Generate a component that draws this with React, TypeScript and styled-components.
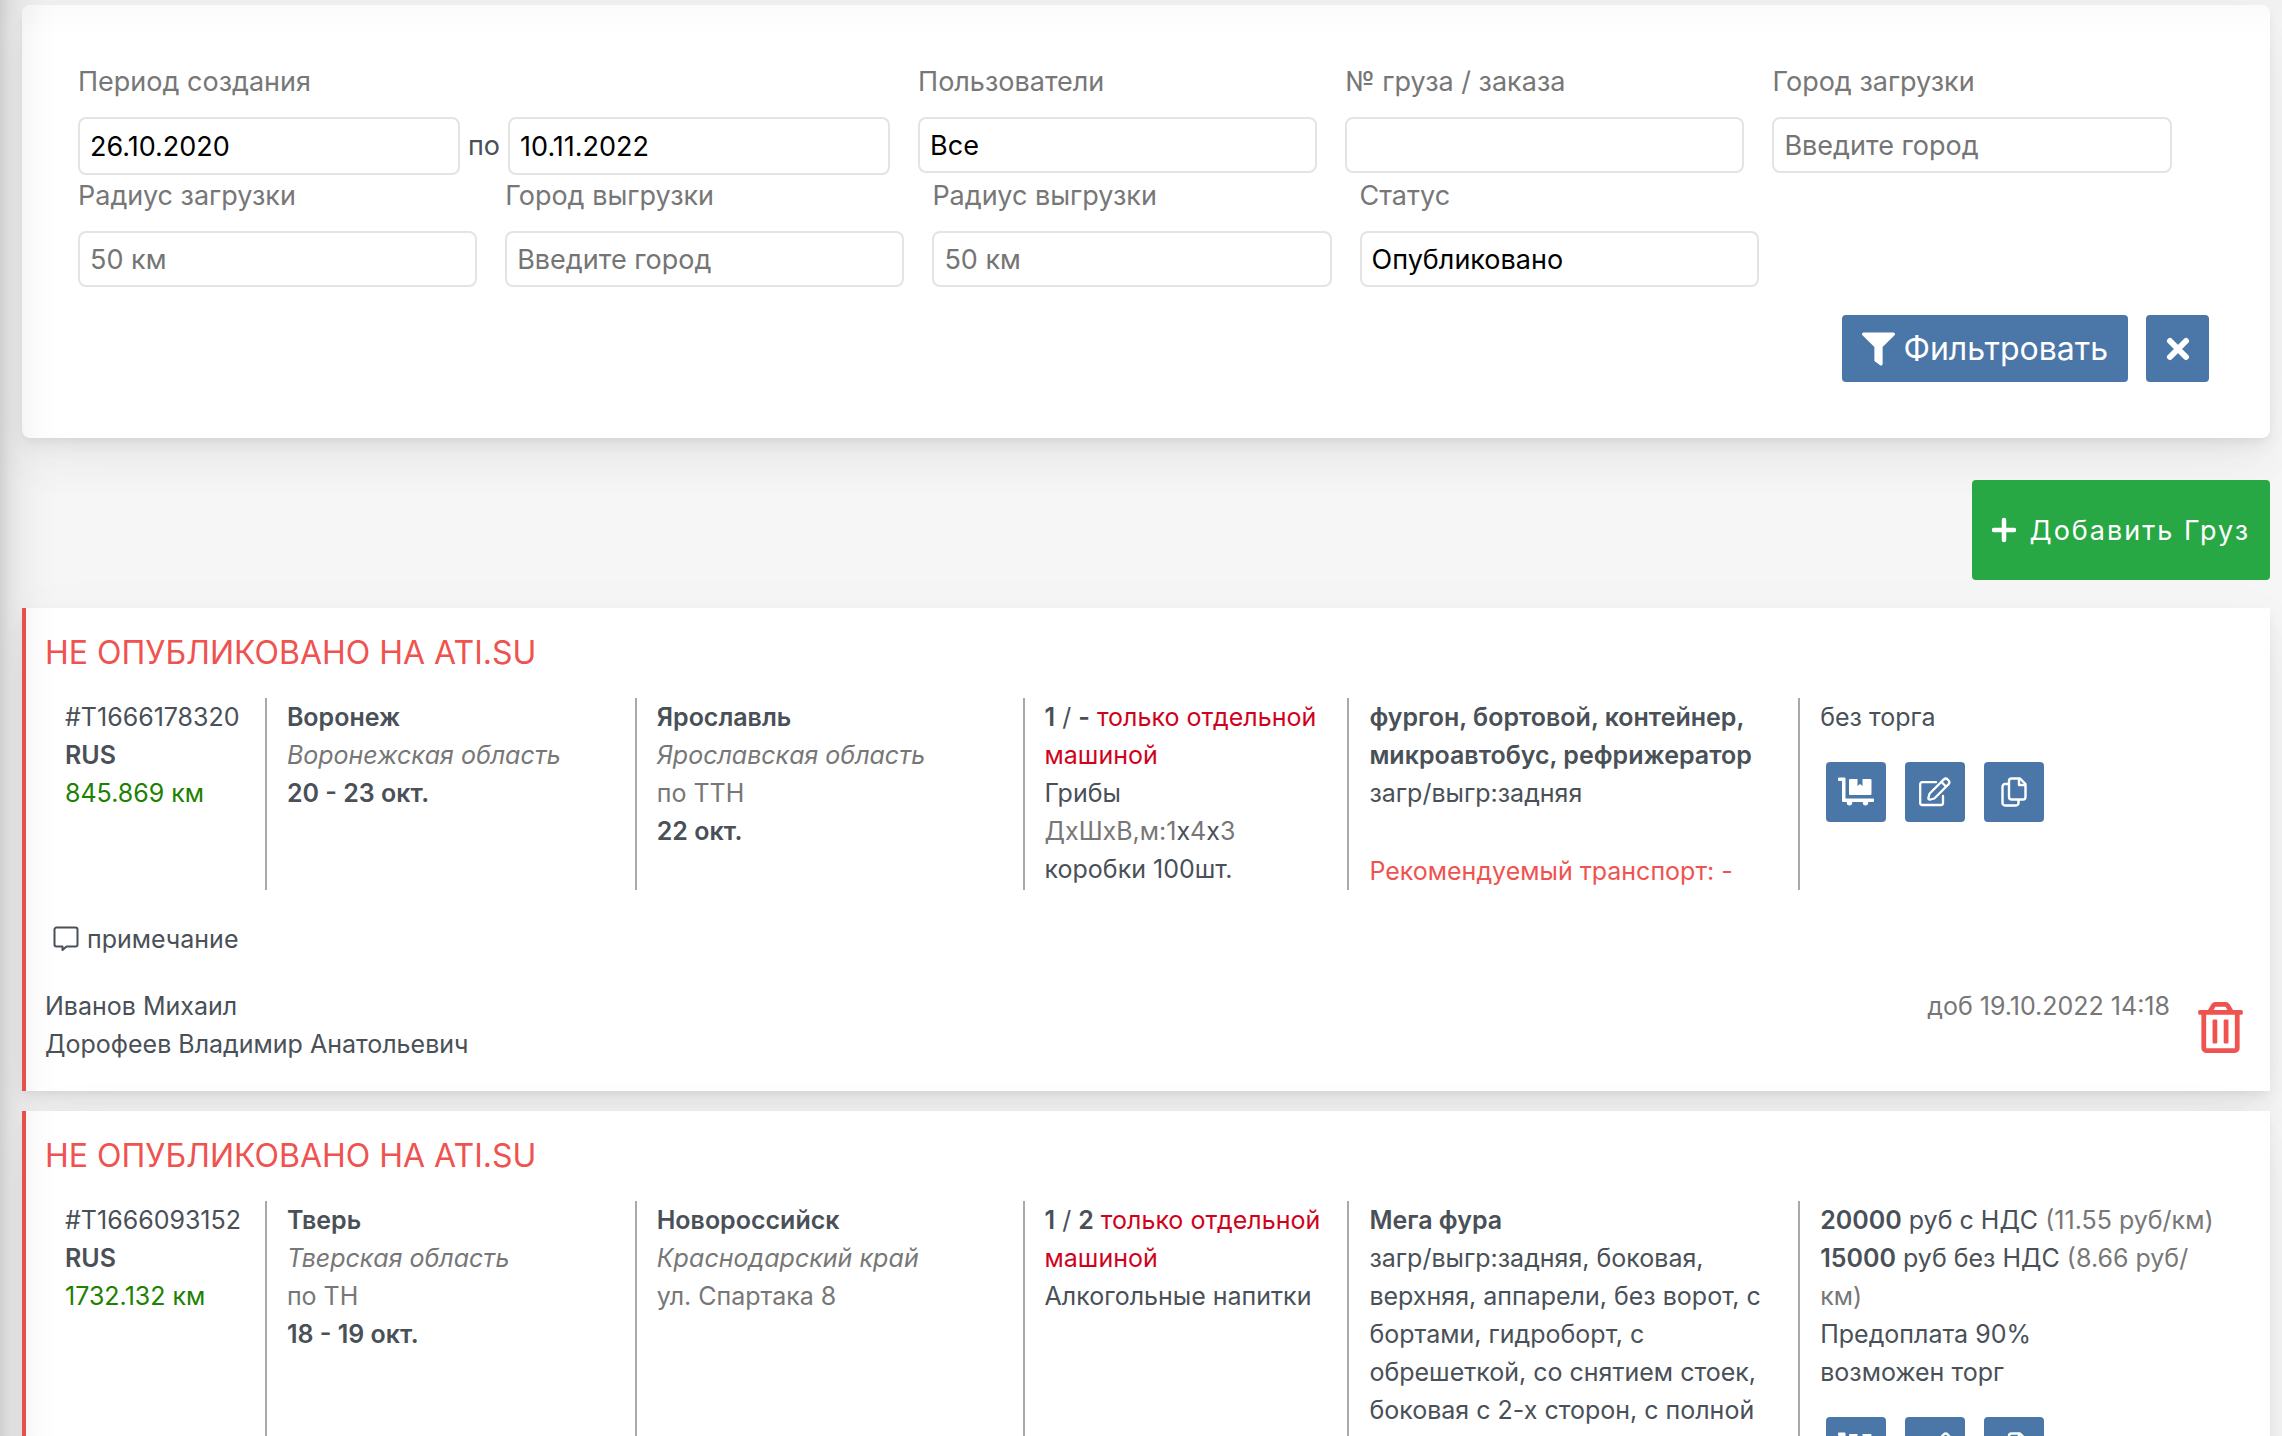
import React, { useId } from 'react';
import styled, { createGlobalStyle } from 'styled-components';

const colors = {
  page: '#f6f6f6',
  text: '#495057',
  muted: '#777777',
  blue: '#4b76a8',
  green: '#28a745',
  danger: '#ef5350',
  warn: '#d0021b',
  distance: '#208000',
  border: '#e4e4e4',
  rule: '#a9a9a9',
};

const cardShadow =
  '0 15px 70px rgba(4, 9, 20, 0.03), 0 30px 45px rgba(4, 9, 20, 0.03), 0 8px 17px rgba(4, 9, 20, 0.05), 0 4px 6px rgba(4, 9, 20, 0.03)';

const GlobalStyle = createGlobalStyle`
  *, *::before, *::after { box-sizing: border-box; }
  body {
    margin: 0;
    background: ${colors.page};
    color: ${colors.text};
    font-family: Inter, "Noto Sans", sans-serif;
    font-size: 25px;
    line-height: 38px;
  }
  button, input { font-family: inherit; }
`;

const Page = styled.main`
  position: relative;
  display: flex;
  flex-direction: column;
  padding: 5px 12px 0 22px;
  height: 100vh;
  overflow: hidden;
`;

const SidebarShade = styled.div`
  position: absolute;
  top: 0;
  bottom: 0;
  left: 0;
  width: 60px;
  pointer-events: none;
  background: linear-gradient(
    to right,
    rgba(0, 0, 0, 0.15) 0,
    rgba(0, 0, 0, 0.08) 10px,
    rgba(0, 0, 0, 0.04) 22px,
    rgba(0, 0, 0, 0.01) 40px,
    rgba(0, 0, 0, 0) 60px
  );
`;

const HeaderShade = styled.div`
  position: absolute;
  top: 0;
  left: 0;
  right: 0;
  height: 36px;
  pointer-events: none;
  background: linear-gradient(to bottom, rgba(0, 0, 0, 0.02), rgba(0, 0, 0, 0));
`;

const FilterCard = styled.form`
  flex: none;
  padding: 56px;
  border-radius: 8px;
  background: #fff;
  box-shadow: ${cardShadow};
`;

const Fields = styled.div`
  display: flex;
  flex-wrap: wrap;
`;

const Field = styled.div`
  flex: 0 0 20%;
  padding-right: 28px;
`;

const PeriodField = styled(Field)`
  flex-basis: auto;
`;

const Label = styled.label`
  display: block;
  padding: 2px 0 16px;
  color: ${colors.muted};
  font-size: 27px;
  line-height: 38px;
`;

const TextInput = styled.input<{ $tall?: boolean }>`
  display: block;
  width: 100%;
  height: ${(p) => (p.$tall ? 58 : 56)}px;
  padding: 0 10px;
  border: 2px solid ${colors.border};
  border-radius: 8px;
  background: #fff;
  color: #000;
  font-size: 27px;
  &::placeholder {
    color: #757575;
    opacity: 1;
  }
`;

const Period = styled.div`
  display: flex;
  align-items: center;
  gap: 8px;
  font-size: 27px;
  & > input {
    width: 382px;
  }
`;

const FilterActions = styled.div`
  display: flex;
  justify-content: flex-end;
  gap: 18px;
  margin-top: 28px;
  padding-right: 5px;
`;

const Button = styled.button`
  display: inline-flex;
  align-items: center;
  justify-content: center;
  padding: 0;
  border: 0;
  border-radius: 4px;
  background: ${colors.blue};
  color: #fff;
  cursor: pointer;
`;

const FilterButton = styled(Button)`
  gap: 8px;
  height: 67px;
  padding: 0 20px;
  font-size: 32px;
`;

const ResetButton = styled(Button)`
  width: 63px;
  height: 67px;
`;

const AddButton = styled(Button)`
  flex: none;
  align-self: flex-end;
  gap: 14px;
  height: 100px;
  margin: 42px 0 28px;
  padding: 0 20px;
  background: ${colors.green};
  font-size: 27px;
  letter-spacing: 2px;
`;

const IconButton = styled(Button)`
  width: 60px;
  height: 60px;
`;

const CargoCard = styled.article`
  flex: none;
  margin-bottom: 20px;
  padding: 20px 20px 28px 19px;
  border-left: 4px solid ${colors.danger};
  background: #fff;
  box-shadow: ${cardShadow};
`;

const CargoTitle = styled.h2`
  margin: 0 0 20px;
  color: ${colors.danger};
  font-size: 32px;
  font-weight: 400;
  line-height: 50px;
`;

const Columns = styled.div`
  display: grid;
  grid-template-columns: 220fr 370fr 388fr 325fr 451fr 452fr;
`;

const Column = styled.div`
  min-width: 0;
  min-height: 192px;
  padding: 0 20px;
  & + & {
    border-left: 2px solid ${colors.rule};
  }
`;

const Line = styled.div``;
const Muted = styled.span`
  color: ${colors.muted};
`;
const Region = styled.em`
  color: ${colors.muted};
`;
const Distance = styled.span`
  color: ${colors.distance};
`;
const Warn = styled.span`
  color: ${colors.warn};
`;
const Recommended = styled.div`
  margin-top: 40px;
  color: ${colors.danger};
`;
const Strong = styled.strong`
  font-weight: 600;
`;

const RowActions = styled.div`
  display: flex;
  gap: 19px;
  padding: 26px 6px;
`;

const Note = styled.div`
  display: flex;
  align-items: center;
  gap: 8px;
  margin-top: 30px;
  padding-left: 8px;
`;

const CardFooter = styled.footer`
  display: flex;
  align-items: flex-start;
  margin-top: 29px;
`;

const People = styled.div`
  flex: 1;
`;

const DeleteButton = styled.button`
  display: flex;
  margin: 15px 7px 0 28px;
  padding: 0;
  border: 0;
  background: none;
  color: ${colors.danger};
  cursor: pointer;
`;

const FunnelIcon = () => (
  <svg width="33" height="34" viewBox="0 0 512 512" fill="currentColor" aria-hidden="true">
    <path d="M488 0H24C2.700 0-8 25.900 7.100 41L192 225.900V432c0 7.800 3.800 15.200 10.200 19.700l80 56C298 518.700 320 507.500 320 488V225.900L505 41C520 25.900 509.300 0 488 0z" />
  </svg>
);

const TimesIcon = () => (
  <svg width="24" height="24" viewBox="0 0 24 24" stroke="currentColor" strokeWidth="6" strokeLinecap="round" aria-hidden="true">
    <path d="M4 4l16 16M20 4L4 20" />
  </svg>
);

const PlusIcon = () => (
  <svg width="24" height="26" viewBox="0 0 24 24" stroke="currentColor" strokeWidth="4.500" strokeLinecap="round" aria-hidden="true">
    <path d="M12 2v20M2 12h20" />
  </svg>
);

const DollyIcon = () => (
  <svg width="36" height="30" viewBox="0 0 36 30" fill="currentColor" aria-hidden="true">
    <path d="M1 0.500h5.500a1 1 0 0 1 1 1V21.500H35a1 1 0 0 1 1 1v1.500a1 1 0 0 1-1 1H5a1 1 0 0 1-1-1V4H1a1 1 0 0 1-1-1V1.500a1 1 0 0 1 1-1z" />
    <path d="M12 2h7.500v7l2.500-2 2.500 2V2h8a1 1 0 0 1 1 1v14a1 1 0 0 1-1 1H12a1 1 0 0 1-1-1V3a1 1 0 0 1 1-1z" />
    <circle cx="11.500" cy="25.800" r="2.700" />
    <circle cx="27.500" cy="25.800" r="2.700" />
  </svg>
);

const EditIcon = () => (
  <svg width="32" height="30" viewBox="0 0 32 30" fill="none" stroke="currentColor" strokeWidth="2.300" strokeLinejoin="round" strokeLinecap="round" aria-hidden="true">
    <path d="M17 5.200H3.200a2 2 0 0 0-2 2V26a2 2 0 0 0 2 2H22a2 2 0 0 0 2-2v-7" />
    <path d="M10.500 16.800L24.600 2.600a3 3 0 0 1 4.200 0l.6.600a3 3 0 0 1 0 4.200L15.300 21.500l-3.800 1a1.500 1.500 0 0 1-2-2zM22.500 5l4.500 4.500" />
  </svg>
);

const CopyIcon = () => (
  <svg width="26" height="30" viewBox="0 0 26 30" fill="none" stroke="currentColor" strokeWidth="2.400" strokeLinejoin="round" aria-hidden="true">
    <path d="M10.500 1.500h8.500l5.500 5.500v13a2.500 2.500 0 0 1-2.500 2.500H10.500a2.500 2.500 0 0 1-2.500-2.500V4a2.500 2.500 0 0 1 2.500-2.500z" />
    <path d="M18 1.500V8H24.500" />
    <path d="M8 7H4a2.500 2.500 0 0 0-2.500 2.500v16.500a2.500 2.500 0 0 0 2.500 2.500H15a2.500 2.500 0 0 0 2.500-2.500V22.500" />
  </svg>
);

const CommentIcon = () => (
  <svg width="26" height="26" viewBox="0 0 26 26" fill="none" stroke="currentColor" strokeWidth="2" strokeLinejoin="round" aria-hidden="true">
    <path d="M3.500 1.500h19a2 2 0 0 1 2 2v15a2 2 0 0 1-2 2h-9l-4 3.500v-3.500h-6a2 2 0 0 1-2-2v-15a2 2 0 0 1 2-2z" />
  </svg>
);

const TrashIcon = () => (
  <svg width="45" height="51" viewBox="0 0 448 512" fill="currentColor" aria-hidden="true">
    <path d="M268 416h24a12 12 0 0 0 12-12V188a12 12 0 0 0-12-12h-24a12 12 0 0 0-12 12v216a12 12 0 0 0 12 12zM432 80h-82.410l-34-56.700A48 48 0 0 0 274.410 0H173.590a48 48 0 0 0-41.160 23.300L98.410 80H16A16 16 0 0 0 0 96v16a16 16 0 0 0 16 16h16v336a48 48 0 0 0 48 48h288a48 48 0 0 0 48-48V128h16a16 16 0 0 0 16-16V96a16 16 0 0 0-16-16zM171.840 50.910A6 6 0 0 1 177 48h94a6 6 0 0 1 5.150 2.910L293.610 80H154.390zM368 464H80V128h288zm-212-48h24a12 12 0 0 0 12-12V188a12 12 0 0 0-12-12h-24a12 12 0 0 0-12 12v216a12 12 0 0 0 12 12z" />
  </svg>
);

function FilterField({ label, value, placeholder }: { label: string; value?: string; placeholder?: string }) {
  const id = useId();
  return (
    <Field>
      <Label htmlFor={id}>{label}</Label>
      <TextInput id={id} defaultValue={value} placeholder={placeholder} />
    </Field>
  );
}

function Actions() {
  return (
    <RowActions>
      <IconButton type="button" aria-label="Погрузка"><DollyIcon /></IconButton>
      <IconButton type="button" aria-label="Редактировать"><EditIcon /></IconButton>
      <IconButton type="button" aria-label="Копировать"><CopyIcon /></IconButton>
    </RowActions>
  );
}

export default function App() {
  return (
    <>
      <GlobalStyle />
      <Page>
        <FilterCard onSubmit={(e) => e.preventDefault()}>
          <Fields>
            <PeriodField>
              <Label htmlFor="period-from">Период создания</Label>
              <Period>
                <TextInput $tall id="period-from" defaultValue="26.10.2020" />
                <label htmlFor="period-to">по</label>
                <TextInput $tall id="period-to" defaultValue="10.11.2022" />
              </Period>
            </PeriodField>
            <FilterField label="Пользователи" value="Все" />
            <FilterField label="№ груза / заказа" />
            <FilterField label="Город загрузки" placeholder="Введите город" />
            <FilterField label="Радиус загрузки" placeholder="50 км" />
            <FilterField label="Город выгрузки" placeholder="Введите город" />
            <FilterField label="Радиус выгрузки" placeholder="50 км" />
            <FilterField label="Статус" value="Опубликовано" />
          </Fields>
          <FilterActions>
            <FilterButton type="submit"><FunnelIcon />Фильтровать</FilterButton>
            <ResetButton type="reset" aria-label="Сбросить"><TimesIcon /></ResetButton>
          </FilterActions>
        </FilterCard>

        <AddButton type="button"><PlusIcon />Добавить Груз</AddButton>

        <CargoCard>
          <CargoTitle>НЕ ОПУБЛИКОВАНО НА ATI.SU</CargoTitle>
          <Columns>
            <Column>
              <Line>#T1666178320</Line>
              <Line><Strong>RUS</Strong></Line>
              <Line><Distance>845.869 км</Distance></Line>
            </Column>
            <Column>
              <Line><Strong>Воронеж</Strong></Line>
              <Line><Region>Воронежская область</Region></Line>
              <Line><Strong>20 - 23 окт.</Strong></Line>
            </Column>
            <Column>
              <Line><Strong>Ярославль</Strong></Line>
              <Line><Region>Ярославская область</Region></Line>
              <Line><Muted>по ТТН</Muted></Line>
              <Line><Strong>22 окт.</Strong></Line>
            </Column>
            <Column>
              <Line><Strong>1</Strong> / <Strong>-</Strong> <Warn>только отдельной машиной</Warn></Line>
              <Line>Грибы</Line>
              <Line><Muted>ДхШхВ,м:1</Muted>х<Muted>4</Muted>х<Muted>3</Muted></Line>
              <Line>коробки 100шт.</Line>
            </Column>
            <Column>
              <Line><Strong>фургон, бортовой, контейнер, микроавтобус, рефрижератор</Strong></Line>
              <Line>загр/выгр:задняя</Line>
              <Recommended>Рекомендуемый транспорт: -</Recommended>
            </Column>
            <Column>
              <Line>без торга</Line>
              <Actions />
            </Column>
          </Columns>
          <Note><CommentIcon />примечание</Note>
          <CardFooter>
            <People>
              <Line>Иванов Михаил</Line>
              <Line>Дорофеев Владимир Анатольевич</Line>
            </People>
            <Muted>доб 19.10.2022 14:18</Muted>
            <DeleteButton type="button" aria-label="Удалить"><TrashIcon /></DeleteButton>
          </CardFooter>
        </CargoCard>

        <CargoCard>
          <CargoTitle>НЕ ОПУБЛИКОВАНО НА ATI.SU</CargoTitle>
          <Columns>
            <Column>
              <Line>#T1666093152</Line>
              <Line><Strong>RUS</Strong></Line>
              <Line><Distance>1732.132 км</Distance></Line>
            </Column>
            <Column>
              <Line><Strong>Тверь</Strong></Line>
              <Line><Region>Тверская область</Region></Line>
              <Line><Muted>по ТН</Muted></Line>
              <Line><Strong>18 - 19 окт.</Strong></Line>
            </Column>
            <Column>
              <Line><Strong>Новороссийск</Strong></Line>
              <Line><Region>Краснодарский край</Region></Line>
              <Line><Muted>ул. Спартака 8</Muted></Line>
            </Column>
            <Column>
              <Line><Strong>1</Strong> / <Strong>2</Strong> <Warn>только отдельной машиной</Warn></Line>
              <Line>Алкогольные напитки</Line>
            </Column>
            <Column>
              <Line><Strong>Мега фура</Strong></Line>
              <Line>
                загр/выгр:задняя, боковая, верхняя, аппарели, без ворот, с бортами, гидроборт, с
                обрешеткой, со снятием стоек, боковая с 2-х сторон, с полной
              </Line>
            </Column>
            <Column>
              <Line><Strong>20000</Strong> руб с НДС <Muted>(11.55 руб/км)</Muted></Line>
              <Line><Strong>15000</Strong> руб без НДС <Muted>(8.66 руб/<wbr />км)</Muted></Line>
              <Line>Предоплата 90%</Line>
              <Line>возможен торг</Line>
              <Actions />
            </Column>
          </Columns>
        </CargoCard>
        <SidebarShade />
        <HeaderShade />
      </Page>
    </>
  );
}
